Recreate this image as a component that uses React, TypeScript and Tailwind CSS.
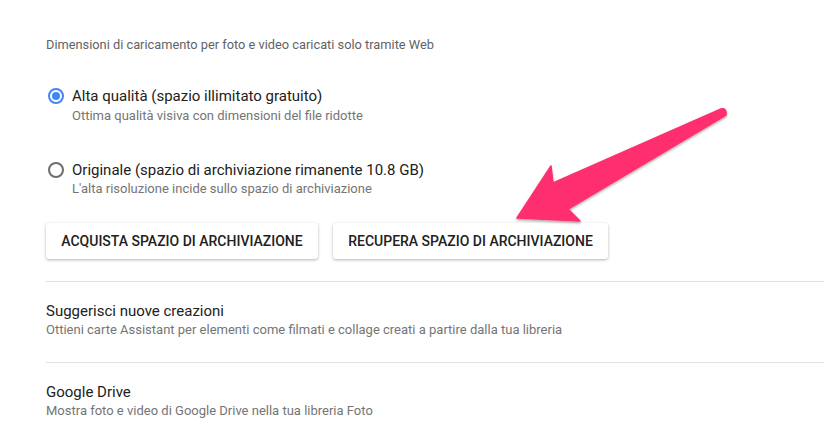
import React from "react";

function Radio({ checked }: { checked: boolean }) {
  return (
    <span
      className={`flex h-4 w-4 shrink-0 items-center justify-center rounded-full border-2 ${
        checked ? "border-[#4285f4]" : "border-[#6d6d6d]"
      }`}
    >
      {checked && <span className="h-2 w-2 rounded-full bg-[#4285f4]" />}
    </span>
  );
}

function Arrow() {
  return (
    <svg
      className="pointer-events-none absolute left-0 top-0"
      width="824"
      height="438"
      viewBox="0 0 824 438"
    >
      <defs>
        <filter id="sh" x="-10%" y="-10%" width="130%" height="130%">
          <feDropShadow dx="0" dy="1.5" stdDeviation="1.2" floodColor="#000" floodOpacity="0.35" />
        </filter>
      </defs>
      <path
        d="M 721 109 Q 727 108 726 115 L 568 209 L 580 221 L 517 218 L 551 166 L 553 183 Z"
        fill="#ff2e6e"
        stroke="#ff2e6e"
        strokeWidth="1.5"
        strokeLinejoin="round"
        filter="url(#sh)"
      />
    </svg>
  );
}

export default function App() {
  return (
    <div
      className="relative h-[438px] w-[824px] overflow-hidden bg-white"
      style={{ fontFamily: "Roboto, 'Liberation Sans', sans-serif" }}
    >
      <div className="flex flex-col pl-[46px] pt-[37px]">
        <div className="text-[12.8px] leading-4 text-[#5f6368]">
          Dimensioni di caricamento per foto e video caricati solo tramite Web
        </div>

        {/* upload size options */}
        <div className="mt-[33px] flex gap-2 pl-[2px]">
          <div className="mt-[2px]">
            <Radio checked />
          </div>
          <div className="flex flex-col">
            <span className="text-[15px] leading-5 text-[#212121]">
              Alta qualità (spazio illimitato gratuito)
            </span>
            <span className="mt-[2px] text-[13px] leading-4 text-[#757575]">
              Ottima qualità visiva con dimensioni del file ridotte
            </span>
          </div>
        </div>

        <div className="mt-[36px] flex gap-2 pl-[2px]">
          <div className="mt-[2px]">
            <Radio checked={false} />
          </div>
          <div className="flex flex-col">
            <span className="text-[15px] leading-5 text-[#212121]">
              Originale (spazio di archiviazione rimanente 10.8 GB)
            </span>
            <span className="mt-px text-[13px] leading-4 text-[#757575]">
              L'alta risoluzione incide sullo spazio di archiviazione
            </span>
          </div>
        </div>

        <div className="mt-[26px] flex gap-[15px]">
          <button className="h-9 w-[272px] rounded-[3px] bg-white text-[14px] font-medium uppercase text-[#212121] shadow-[0_1px_3px_rgba(0,0,0,0.3)]">
            Acquista spazio di archiviazione
          </button>
          <button className="h-9 w-[275px] rounded-[3px] bg-white text-[14px] font-medium uppercase text-[#212121] shadow-[0_1px_3px_rgba(0,0,0,0.3)]">
            Recupera spazio di archiviazione
          </button>
        </div>

        <div className="mt-[22px] border-t border-[#e0e0e0]" />

        <div className="mt-[19px] flex flex-col">
          <span className="text-[15px] leading-5 text-[#212121]">Suggerisci nuove creazioni</span>
          <span className="mt-px text-[13px] leading-4 text-[#757575]">
            Ottieni carte Assistant per elementi come filmati e collage creati a partire dalla tua libreria
          </span>
        </div>

        <div className="mt-[24px] border-t border-[#e0e0e0]" />

        <div className="mt-[19px] flex flex-col">
          <span className="text-[15px] leading-5 text-[#212121]">Google Drive</span>
          <span className="mt-px text-[13px] leading-4 text-[#757575]">
            Mostra foto e video di Google Drive nella tua libreria Foto
          </span>
        </div>
      </div>

      <Arrow />
    </div>
  );
}
